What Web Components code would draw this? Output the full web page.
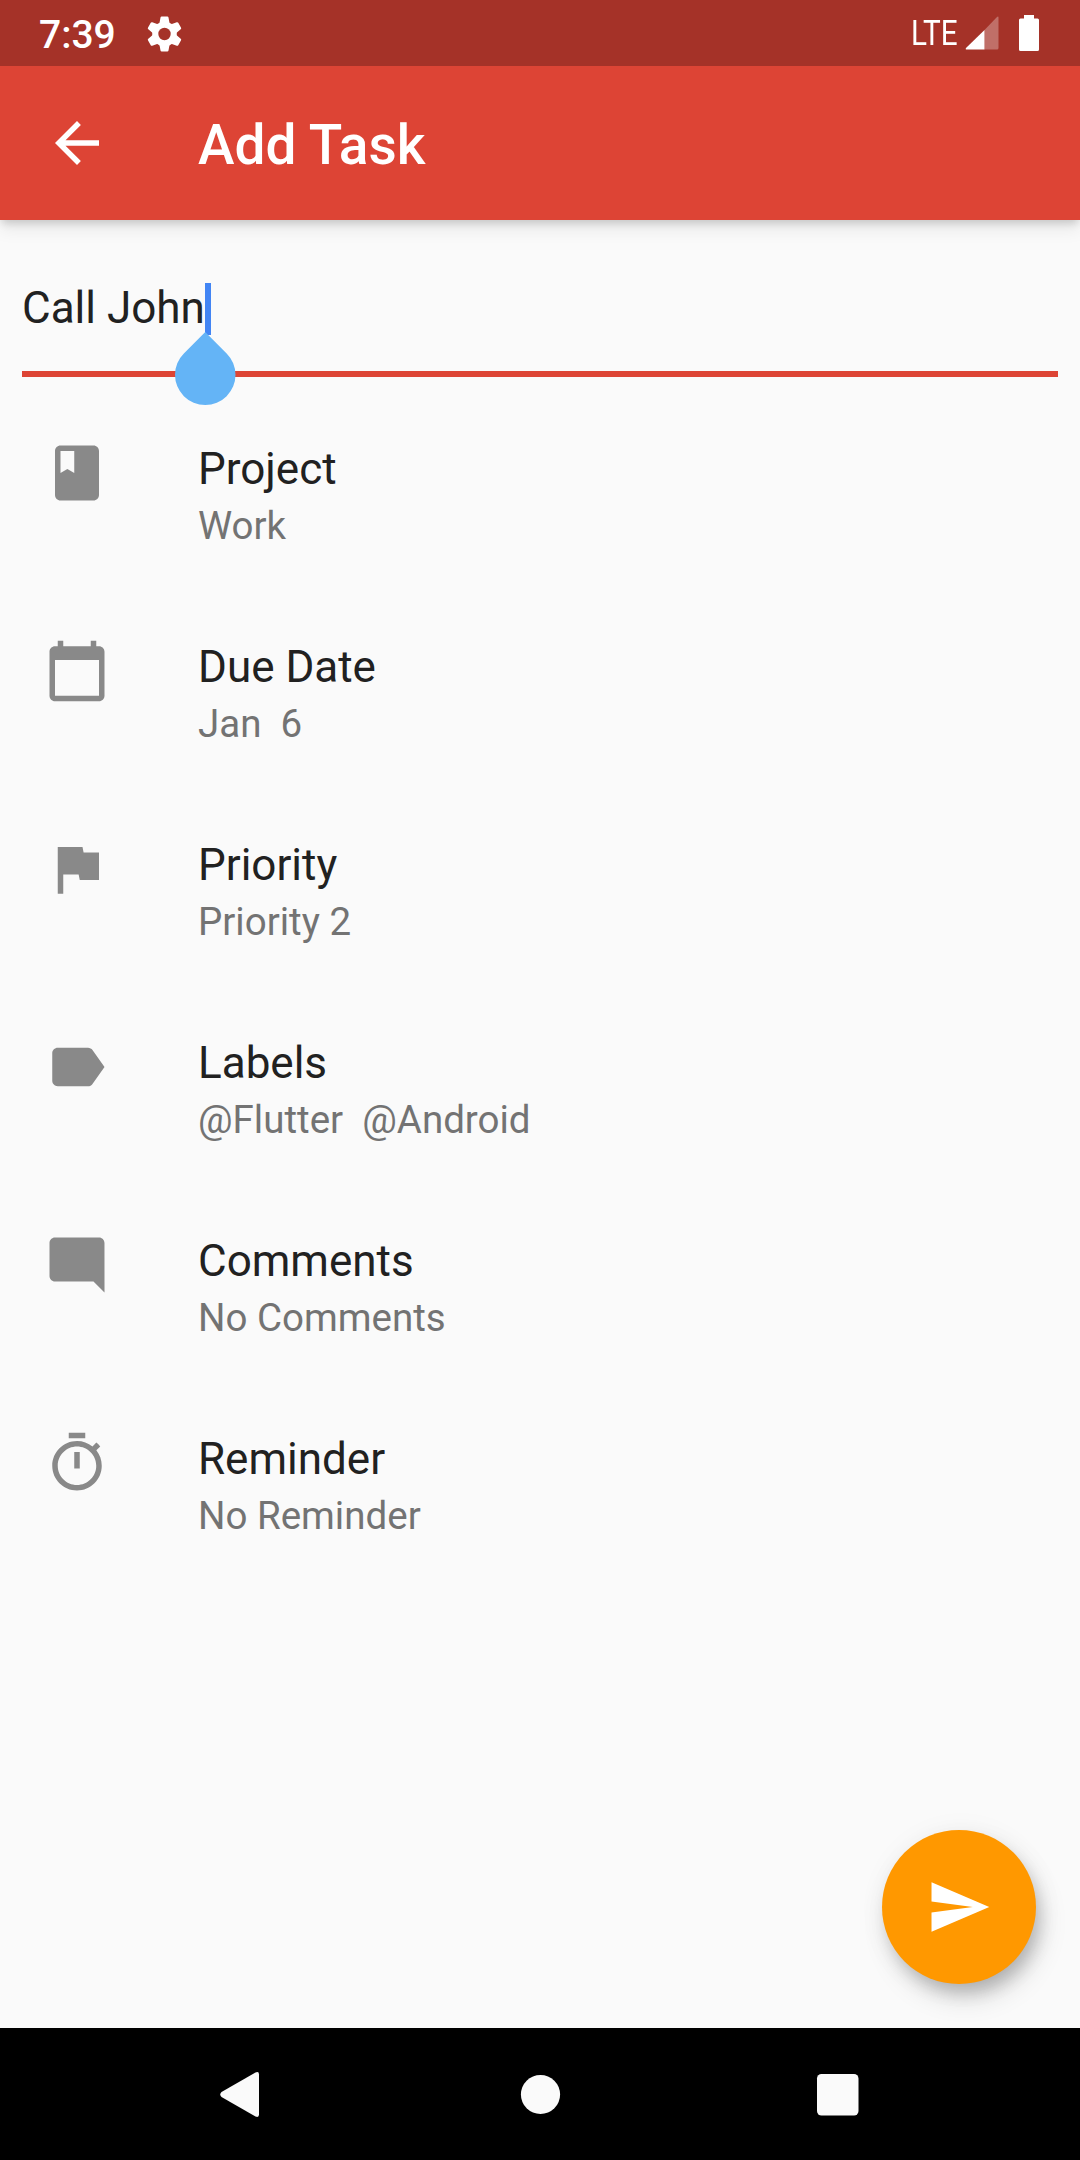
<!DOCTYPE html>
<html lang="en">
<head>
<meta charset="utf-8">
<title>Add Task</title>
<style>
html,body{margin:0;padding:0}
body{width:1080px;height:2160px;overflow:hidden;background:#fafafa;font-family:Roboto,sans-serif}
</style>
</head>
<body>
<task-screen></task-screen>
<script>
const ICONS = {
  back: 'M20 11H7.83l5.59-5.59L12 4l-8 8 8 8 1.41-1.41L7.83 13H20v-2z',
  book: 'M18 2H6c-1.1 0-2 .9-2 2v16c0 1.1.9 2 2 2h12c1.1 0 2-.9 2-2V4c0-1.1-.9-2-2-2zM6 4h5v8l-2.5-1.5L6 12V4z',
  calendar: 'M20 3h-1V1h-2v2H7V1H5v2H4c-1.1 0-2 .9-2 2v16c0 1.1.9 2 2 2h16c1.1 0 2-.9 2-2V5c0-1.1-.9-2-2-2zm0 18H4V8h16v13z',
  flag: 'M14.4 6L14 4H5v17h2v-7h5.6l.4 2h7V6z',
  label: 'M17.63 5.84C17.27 5.33 16.67 5 16 5L5 5.01C3.9 5.01 3 5.9 3 7v10c0 1.1.9 1.99 2 1.99L16 19c.67 0 1.27-.33 1.63-.84L22 12l-4.37-6.16z',
  comment: 'M21.99 4c0-1.1-.89-2-1.99-2H4c-1.1 0-2 .9-2 2v12c0 1.1.9 2 2 2h14l4 4-.01-18z',
  timer: 'M15 1H9v2h6V1zm-4 13h2V8h-2v6zm8.03-6.61l1.42-1.42c-.43-.51-.9-.99-1.41-1.41l-1.42 1.42C16.07 4.74 14.12 4 12 4c-4.97 0-9 4.03-9 9s4.02 9 9 9 9-4.03 9-9c0-2.12-.74-4.07-1.97-5.61zM12 20c-3.87 0-7-3.13-7-7s3.13-7 7-7 7 3.13 7 7-3.13 7-7 7z',
  send: 'M2.01 21L23 12 2.01 3 2 10l15 2-15 2z'
};
function define(name, render) {
  customElements.define(name, class extends HTMLElement {
    connectedCallback() {
      if (this.shadowRoot) return;
      this.attachShadow({mode: 'open'}).innerHTML = render(this);
    }
  });
}
define('md-icon', el => `
<style>:host{display:block;flex:none;width:66px;height:66px}svg{display:block;width:100%;height:100%}</style>
<svg viewBox="0 0 24 24" fill="currentColor"><path d="${ICONS[el.getAttribute('name')]}"/></svg>`);

define('status-bar', () => `
<style>
:host{display:flex;align-items:center;box-sizing:border-box;height:66px;background:#a53228;color:#fff;padding:0 41px 0 39px;position:relative;z-index:2}
.time{font-size:39px;font-weight:500;line-height:46px;padding-top:3px;width:75px;white-space:nowrap}
.gear{margin:1px 0 0 33px}
.net{margin-left:auto;font-size:34.500px;line-height:40px;width:47px;margin-right:7px;white-space:nowrap}
.net span{display:inline-block;transform:scaleX(.86);transform-origin:0 50%}
svg{display:block;flex:none}
.bat{margin-left:20px}
</style>
<span class="time">7:39</span>
<svg class="gear" width="35" height="36" viewBox="-17.500 -18 35 36"><defs><mask id="hole"><rect x="-18" y="-18" width="36" height="36" fill="#fff"/><circle r="6.200" fill="#000"/></mask></defs>
<g mask="url(#hole)" fill="#fff"><circle r="12.300"/><path id="a" d="M-5.200 -10L-4 -16.400Q-3.800 -17.500 -2.800 -17.500H2.800Q3.800 -17.500 4 -16.400L5.200 -10V10L4 16.400Q3.800 17.500 2.800 17.500H-2.800Q-3.800 17.500 -4 16.400L-5.200 10Z"/><use href="#a" transform="rotate(60)"/><use href="#a" transform="rotate(120)"/></g></svg>
<span class="net"><span>LTE</span></span>
<svg width="34" height="34" viewBox="0 0 34 34"><path d="M19.500 14V33.500H32Q33.500 33.500 33.500 32V1.500Q33.500 0 32 1Z" fill="#fff" fill-opacity=".3"/><path d="M19.500 14V33.500H2Q0 33.500 1 32Z" fill="#fff"/></svg>
<svg class="bat" width="20" height="36" viewBox="0 0 20 36"><path d="M5 0H15V3.500H18.500Q20 3.500 20 5V34.500Q20 36 18.500 36H1.500Q0 36 0 34.500V5Q0 3.500 1.500 3.500H5Z" fill="#fff"/></svg>`);

define('app-bar', () => `
<style>
:host{display:flex;align-items:center;box-sizing:border-box;height:154px;padding:0 44px;gap:88px;background:#dd4435;color:#fff;position:relative;
box-shadow:0 5px 8px -2px rgba(0,0,0,.16),0 10px 16px rgba(0,0,0,.07)}
h1{margin:0;font-size:55px;font-weight:500;line-height:64px;padding-top:4px}
</style>
<md-icon name="back"></md-icon><h1><slot></slot></h1>`);

define('text-field', () => `
<style>
:host{display:flex;box-sizing:border-box;height:157px;margin:0 22px;border-bottom:6px solid #dd4435;position:relative;color:#212121}
.value{font-size:44px;line-height:52px;padding-top:62px;height:52px;white-space:nowrap}
.caret{width:6px;height:52px;margin-top:63px;background:#4285f4}
.handle{position:absolute;left:152.750px;top:112px}
</style>
<span class="value"><slot></slot></span><span class="caret"></span>
<svg class="handle" width="61" height="73.500" viewBox="0 0 61 73.500"><path d="M30.250 0L51.640 21.390A30.250 30.250 0 1 1 8.860 21.390Z" fill="#64b4f6"/></svg>`);

define('task-option', el => `
<style>
:host{display:flex;box-sizing:border-box;height:198px;padding:44px 44px 0;gap:88px;color:#212121}
md-icon{color:#898989}
.text{display:flex;flex-direction:column;padding-top:3px}
.title{font-size:44px;line-height:52px}
.sub{font-size:38.500px;line-height:46px;padding-top:8px;color:#737373;white-space:pre}
</style>
<md-icon name="${el.getAttribute('icon')}"></md-icon>
<div class="text"><span class="title"><slot name="title"></slot></span><span class="sub"><slot></slot></span></div>`);

define('send-button', () => `
<style>
:host{position:absolute;right:44px;bottom:44px;width:154px;height:154px;border-radius:50%;background:#ff9800;color:#fff;display:flex;align-items:center;justify-content:center;
box-shadow:5px 11px 16px -3px rgba(0,0,0,.18),6px 15px 27px rgba(0,0,0,.13),2px 3px 30px rgba(0,0,0,.05)}
</style><md-icon name="send"></md-icon>`);

define('nav-bar', () => `
<style>
:host{display:flex;align-items:center;justify-content:space-between;box-sizing:border-box;height:132px;padding:0 209px 0 211px;background:#000}
svg{display:block;width:66px;height:66px;fill:#fafafa}
</style>
<svg viewBox="0 0 66 66"><path d="M10.500 31L44.500 11.500Q48 10 48 13.500V53.500Q48 57 44.500 55.500L10.500 36Q8 33.500 10.500 31Z"/></svg>
<svg viewBox="0 0 66 66"><circle cx="32.500" cy="33.500" r="19.600"/></svg>
<svg viewBox="0 0 66 66"><rect x="12" y="13" width="41.500" height="41.500" rx="4.500"/></svg>`);

define('task-screen', () => `
<style>
:host{display:flex;flex-direction:column;width:1080px;height:2160px;background:#fafafa}
main{flex:1;position:relative}
.options{padding-top:19px}
</style>
<status-bar></status-bar>
<app-bar>Add Task</app-bar>
<main>
<text-field>Call John</text-field>
<div class="options">
<task-option icon="book"><span slot="title">Project</span>Work</task-option>
<task-option icon="calendar"><span slot="title">Due Date</span>Jan  6</task-option>
<task-option icon="flag"><span slot="title">Priority</span>Priority 2</task-option>
<task-option icon="label"><span slot="title">Labels</span>@Flutter  @Android</task-option>
<task-option icon="comment"><span slot="title">Comments</span>No Comments</task-option>
<task-option icon="timer"><span slot="title">Reminder</span>No Reminder</task-option>
</div>
<send-button></send-button>
</main>
<nav-bar></nav-bar>`);
</script>
</body>
</html>
